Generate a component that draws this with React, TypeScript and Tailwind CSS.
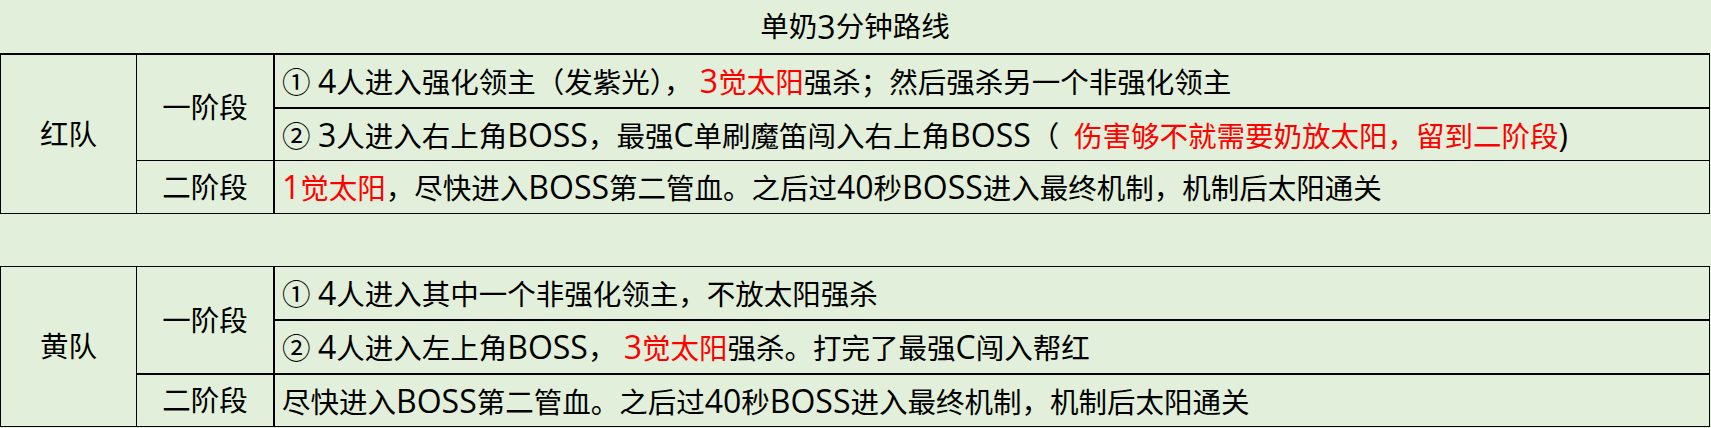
const font = { fontFamily: '"Open Sans", "Noto Sans CJK SC", "Noto Sans", sans-serif' };

type Seg = { t: string; red?: boolean };

type Team = {
  name: string;
  topBorder: string;
  stepOneLine: string;
  phaseOneLine: string;
  rows: string;
  steps: Seg[][];
};

const teams: Team[] = [
  {
    name: "红队",
    topBorder: "border-t-2",
    stepOneLine: "border-b-2",
    phaseOneLine: "border-b",
    rows: "grid-rows-[54px_52px_52px]",
    steps: [
      [
        { t: "① 4人进入强化领主（发紫光）， " },
        { t: "3觉太阳", red: true },
        { t: "强杀；然后强杀另一个非强化领主" },
      ],
      [
        { t: "② 3人进入右上角BOSS，最强C单刷魔笛闯入右上角BOSS（  " },
        { t: "伤害够不就需要奶放太阳，留到二阶段", red: true },
        { t: ")" },
      ],
      [
        { t: "1觉太阳", red: true },
        { t: "，尽快进入BOSS第二管血。之后过40秒BOSS进入最终机制，机制后太阳通关" },
      ],
    ],
  },
  {
    name: "黄队",
    topBorder: "border-t",
    stepOneLine: "border-b-2",
    phaseOneLine: "border-b-2",
    rows: "grid-rows-[54px_54px_51px]",
    steps: [
      [{ t: "① 4人进入其中一个非强化领主，不放太阳强杀" }],
      [
        { t: "② 4人进入左上角BOSS， " },
        { t: "3觉太阳", red: true },
        { t: "强杀。打完了最强C闯入帮红" },
      ],
      [{ t: "尽快进入BOSS第二管血。之后过40秒BOSS进入最终机制，机制后太阳通关" }],
    ],
  },
];

// latin letters in the sheet's font run larger than the CJK glyphs
function Runs({ text }: { text: string }) {
  return (
    <>
      {text.split(/([A-Za-z0-9()]+)/).map((p, i) =>
        i % 2 ? (
          <span key={i} className="text-[32px]">
            {p}
          </span>
        ) : (
          p
        )
      )}
    </>
  );
}

function Line({ segs }: { segs: Seg[] }) {
  return (
    <span className="whitespace-pre">
      {segs.map((s, i) => (
        <span key={i} className={s.red ? "text-[#ff0000]" : ""}>
          <Runs text={s.t} />
        </span>
      ))}
    </span>
  );
}

function TeamBlock({ team }: { team: Team }) {
  return (
    <div
      className={`grid grid-cols-[136px_138px_1fr] ${team.rows} border-l border-b border-black ${team.topBorder}`}
    >
      <div className="row-span-3 flex items-center justify-center border-r border-black">
        {team.name}
      </div>
      <div
        className={`row-span-2 flex items-center justify-center border-r-2 border-black ${team.phaseOneLine}`}
      >
        一阶段
      </div>
      <div className={`flex items-center pl-[7px] border-r border-black ${team.stepOneLine}`}>
        <Line segs={team.steps[0]} />
      </div>
      <div className={`flex items-center pl-[7px] border-r border-black ${team.phaseOneLine}`}>
        <Line segs={team.steps[1]} />
      </div>
      <div className="flex items-center justify-center border-r-2 border-black">二阶段</div>
      <div className="flex items-center pl-[7px] border-r border-black">
        <Line segs={team.steps[2]} />
      </div>
    </div>
  );
}

export default function App() {
  return (
    <div
      style={font}
      className="w-[1711px] h-[428px] bg-[#e2efda] text-[28.5px] font-normal leading-none text-black overflow-hidden"
    >
      <div className="w-[1710px]">
        <div className="h-[53px] flex items-center justify-center">
          <Runs text="单奶3分钟路线" />
        </div>
        <TeamBlock team={teams[0]} />
        <div className="h-[52px]" />
        <TeamBlock team={teams[1]} />
      </div>
    </div>
  );
}
